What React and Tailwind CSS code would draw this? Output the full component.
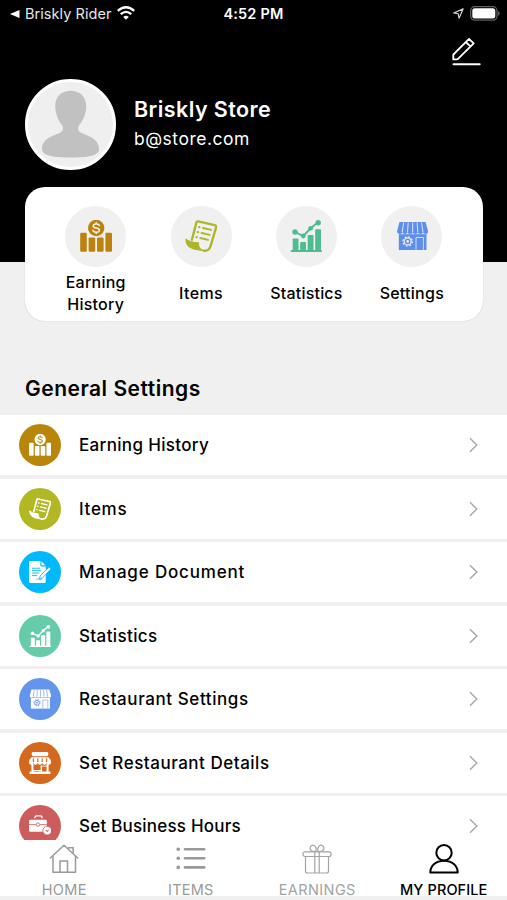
import React from 'react';

const EarningIcon = ({ className, cut }) => (
    <svg viewBox="0 0 32 32" className={className} fill="currentColor">
        <rect x="0.2" y="12.8" width="6.6" height="19" rx="1.2" />
        <rect x="8.6" y="17.4" width="6.6" height="14.4" rx="1.2" />
        <rect x="17" y="17.4" width="6.6" height="14.4" rx="1.2" />
        <rect x="25.4" y="12.8" width="6.6" height="19" rx="1.2" />
        <circle cx="16.2" cy="8" r="8.2" />
        <path d="M19.3 5.6C19 4.4 17.9 3.9 16.2 3.9c-1.8 0-3 .7-3 2 0 3 6.2 1.3 6.2 4.3 0 1.3-1.3 2-3.2 2-1.9 0-3.1-.7-3.3-2M16.2 2.6v1.3M16.2 12.2v1.3" fill="none" stroke={cut} strokeWidth="1.5" strokeLinecap="round" />
    </svg>
);

const ItemsIcon = ({ className }) => (
    <svg viewBox="0 0 32 32" className={className} fill="none" stroke="currentColor" strokeWidth="2.4" strokeLinejoin="round" strokeLinecap="round">
        <path d="M7 19.5 11.4 2.500q.4-1.400 1.800-1.100l16.500 3.700q1.900.5 1.400 2.300L25.600 26q-1.600 5.200-6.600 4.700" />
        <path d="M1 19.300q4 3.300 12.400 3.700c-.3 4.500 1.800 7 5.600 7.700L9.500 29C4.500 28 1 24.500 1 19.300z" fill="currentColor" strokeWidth="1.3" />
        <path d="M18 8l8.200 1.900M16.600 13l8.200 1.900M15.300 18l7.800 1.900" strokeWidth="1.9" />
        <path d="M14.200 7.100h.1M12.900 12.100h.1M11.600 17.100h.1" strokeWidth="2.4" />
    </svg>
);

const DocumentIcon = ({ className, cut }) => (
    <svg viewBox="0 0 32 32" className={className} fill="currentColor">
        <path d="M2 0h14.500v6.500q0 1.500 1.500 1.500h6.300v22q0 2-2 2H2q-2 0-2-2V2q0-2 2-2z" />
        <path d="M18 .5 23.800 6.300H18z" />
        <path d="M4.300 10.500h12M4.300 14h13M4.300 17.500h10.500M4.300 21h7.500" stroke={cut} strokeWidth="1.3" />
        <path d="M29.300 8.800l3 2.700-12.700 12.700-4.600 1.600 1.500-4.400z" stroke={cut} strokeWidth="1.2" />
        <path d="M10.500 27.500q2.500-3 4-1.200t5-.6" fill="none" stroke={cut} strokeWidth="1.2" />
    </svg>
);

const StatisticsIcon = ({ className }) => (
    <svg viewBox="0 0 32 32" className={className} fill="currentColor">
        <rect x="2.7" y="18.6" width="5.8" height="12" rx=".8" />
        <rect x="10.2" y="22" width="5.8" height="9" rx=".8" />
        <rect x="17.7" y="15" width="5.8" height="16" rx=".8" />
        <rect x="25.2" y="9.3" width="5.8" height="22" rx=".8" />
        <rect x=".6" y="30" width="31.4" height="1.9" rx=".9" />
        <path d="M5 12l8.300 4 7.400-7.700L28 2.300" fill="none" stroke="currentColor" strokeWidth="1.9" />
        <circle cx="5" cy="12" r="2.7" />
        <circle cx="13.3" cy="16" r="2.4" />
        <circle cx="20.7" cy="8.3" r="2.4" />
        <circle cx="28.2" cy="2.7" r="2.7" />
    </svg>
);

const StoreIcon = ({ className, cut }) => (
    <svg viewBox="0 0 32 32" className={className} fill="currentColor">
        <path d="M3.500 2h26l2.800 9.500q0 2.400-2.600 2.400t-2.600-2q0 2-2.600 2t-2.600-2q0 2-2.600 2t-2.600-2q0 2-2.600 2t-2.600-2q0 2-2.600 2t-2.600-2q0 2-2.600 2T1 11.500z" />
        <path d="M7.700 2.500 6.200 12M12.200 2.500l-.7 9.500M16.700 2.500V12M21.100 2.500l.7 9.500M25.500 2.500 27 12" fill="none" stroke={cut} strokeWidth=".9" />
        <path d="M2.800 14.200h27.700V30H2.800z" />
        <circle cx="11.7" cy="21.4" r="3.500" fill="none" stroke={cut} strokeWidth="1.3" />
        <circle cx="11.7" cy="21.4" r="4.7" fill="none" stroke={cut} strokeWidth="1.2" strokeDasharray="1.85 1.84" />
        <circle cx="11.7" cy="21.4" r="1.3" fill={cut} />
        <path d="M20 29.800V17.500h7.400v12.300" fill="none" stroke={cut} strokeWidth=".8" />
    </svg>
);

const RestaurantIcon = ({ className, cut }) => (
    <svg viewBox="0 0 32 32" className={className} fill="currentColor">
        <rect x="4" y="0" width="24" height="6" rx="1.5" />
        <path d="M3.500 7.500h25l3.500 5v2.300H0v-2.300z" />
        <path d="M0 13h32v2.200a3.200 3.200 0 0 1-6.400 0 3.200 3.200 0 0 1-6.400 0 3.200 3.200 0 0 1-6.400 0 3.200 3.200 0 0 1-6.400 0 3.200 3.200 0 0 1-6.400 0z" />
        <path d="M6.400 9.500v5M12.800 9.500v5M19.200 9.500v5M25.600 9.500v5" stroke={cut} strokeWidth="1.7" />
        <path d="M3.500 17h3v12h-3zM25.500 17h3v12h-3zM.8 28.500h30.400V32H.8zM17 20h2v9h-2zM6 26h12v1.800H6z" />
        <path d="M17 20.500h9" stroke="currentColor" strokeWidth="1.2" />
    </svg>
);

const BriefcaseIcon = ({ className, cut }) => (
    <svg viewBox="0 0 32 32" className={className} fill="currentColor">
        <path d="M8.500 4.700V3.800q0-2.500 2.500-2.500h5.500Q19 1.300 19 3.800v.9" fill="none" stroke="currentColor" strokeWidth="1.8" />
        <rect x="0" y="7" width="26" height="17.5" rx="2" />
        <path d="M0 14h10M16 14h10" stroke={cut} strokeWidth="1.2" />
        <circle cx="13" cy="14" r="2.5" fill="currentColor" stroke={cut} strokeWidth="1.2" />
        <circle cx="26.5" cy="22.7" r="6.4" stroke={cut} strokeWidth="1.2" />
        <path d="M23.500 22l3 2.800 3-2.800z" fill={cut} />
    </svg>
);

const HomeIcon = () => (
    <svg viewBox="0 0 30 30" className="size-[30px]" fill="none" stroke="currentColor" strokeWidth="1.5" strokeLinejoin="round" strokeLinecap="round">
        <path d="M4 12.500V28.300h22.500V12.500" />
        <path d="M1.300 14 15 1.300 28.700 14M19.500 3.800h4.700v5" />
        <path d="M11 28V17h7.500v11" />
    </svg>
);

const ListIcon = () => (
    <svg viewBox="0 0 30 30" className="size-[30px]" fill="none" stroke="currentColor" strokeLinecap="round">
        <path d="M9 5.200h19.200M9 14.300h19.200M9 23.400h19.200" strokeWidth="2.6" />
        <path d="M2.200 5.200h.1M2.200 14.300h.1M2.200 23.400h.1" strokeWidth="3.6" />
    </svg>
);

const GiftIcon = () => (
    <svg viewBox="0 0 30 30" className="size-[30px]" fill="none" stroke="currentColor" strokeWidth="1.2" strokeLinejoin="round">
        <rect x="1" y="7.8" width="28" height="4.7" rx="2" />
        <path d="M3.500 12.500V27q0 2 2 2h19q2 0 2-2V12.500M12.800 7.800V29M17.200 7.800V29" />
        <path d="M13.500 7.500C10.500 7.800 7.800 6.500 8 4c.2-2.800 3.500-3.800 5.300-1.500 1 1.300 1.200 3.500.2 5zM16.500 7.500c3 .3 5.700-1 5.500-3.500-.2-2.800-3.500-3.800-5.300-1.500-1 1.300-1.200 3.500-.2 5z" />
    </svg>
);

const ProfileIcon = () => (
    <svg viewBox="0 0 30 30" className="size-[30px]" fill="none" stroke="currentColor" strokeWidth="2" strokeLinejoin="round">
        <circle cx="15" cy="8.7" r="7.7" />
        <path d="M1.300 28.500C1.300 21.500 7 16.700 15 16.700s13.700 4.800 13.700 11.800z" />
    </svg>
);

const shortcuts = [
    { label: 'Earning History', Icon: EarningIcon, color: 'text-[#bd820b]', text: 'tracking-[0.25px]' },
    { label: 'Items', Icon: ItemsIcon, color: 'text-[#aeb52b]', text: 'tracking-[0.4px]' },
    { label: 'Statistics', Icon: StatisticsIcon, color: 'text-[#4dbc90]', text: 'tracking-[0.2px]' },
    { label: 'Settings', Icon: StoreIcon, color: 'text-[#5d8eea]', text: 'tracking-[0.25px]' }
];

const settings = [
    { label: 'Earning History', Icon: EarningIcon, bg: 'bg-[#b8860b]', cut: '#b8860b', text: 'tracking-[0.33px]' },
    { label: 'Items', Icon: ItemsIcon, bg: 'bg-[#b2b724]', cut: '#b2b724', text: 'tracking-[0.7px]' },
    { label: 'Manage Document', Icon: DocumentIcon, bg: 'bg-[#00b9fb]', cut: '#00b9fb', text: 'tracking-[0.83px]' },
    { label: 'Statistics', Icon: StatisticsIcon, bg: 'bg-[#66cba8]', cut: '#66cba8', text: 'tracking-[0.38px]' },
    { label: 'Restaurant Settings', Icon: StoreIcon, bg: 'bg-[#6495ed]', cut: '#6495ed', text: 'tracking-[0.58px]' },
    { label: 'Set Restaurant Details', Icon: RestaurantIcon, bg: 'bg-[#d2691e]', cut: '#d2691e', text: 'tracking-[0.52px]' },
    { label: 'Set Business Hours', Icon: BriefcaseIcon, bg: 'bg-[#cd5c5c]', cut: '#cd5c5c', text: 'tracking-[0.21px]' }
];

const tabs = [
    { label: 'HOME', Icon: HomeIcon, style: 'text-[#999]', text: 'tracking-[0.3px]' },
    { label: 'ITEMS', Icon: ListIcon, style: 'text-[#999]', text: 'tracking-[0.2px]' },
    { label: 'EARNINGS', Icon: GiftIcon, style: 'text-[#a3a3a3]', text: 'tracking-[0.4px]' },
    { label: 'MY PROFILE', Icon: ProfileIcon, style: 'text-black font-medium', text: 'tracking-[0.1px]' }
];

const StatusBar = () => (
    <div className="grid grid-cols-3 items-center h-7 px-[10px] text-white text-[14.5px] leading-none">
        <div className="flex items-center">
            <svg viewBox="0 0 10 8" className="w-[10px] h-2 mr-[5px]" fill="currentColor"><path d="M0 4 9.500 0v8z" /></svg>
            <span className="tracking-[0.05px] whitespace-nowrap text-gray-200">Briskly Rider</span>
            <svg viewBox="0 0 18 14" className="w-[18px] h-[14px] ml-[5.5px] -mt-[2px] shrink-0" fill="none" stroke="currentColor" strokeWidth="2.3">
                <path d="M.8 4.900q8.200-7.400 16.400 0M3.700 8.100q5.300-4.500 10.600 0" />
                <path d="M9 13.700 6.200 10.900q2.800-2.300 5.600 0z" fill="currentColor" stroke="none" />
            </svg>
        </div>
        <span className="text-center font-semibold tracking-[0.2px]">4:52 PM</span>
        <div className="flex items-center justify-end">
            <svg viewBox="0 0 12 12" className="size-[11px] mr-[6px] -mt-[2px]" fill="none" stroke="#d4d4d4" strokeWidth="1.3" strokeLinejoin="round">
                <path d="M11 1 .8 5.400l4.900.9.900 4.900z" />
            </svg>
            <svg viewBox="0 0 30 15" className="w-[30px] h-[15px] -mr-[3px] -mt-[1px]">
                <rect x=".7" y=".7" width="26.3" height="13.4" rx="4" fill="none" stroke="#606060" strokeWidth="1.3" />
                <rect x="2.3" y="2.3" width="23" height="10.2" rx="2.5" fill="#fff" />
                <path d="M28 5q1.600.8 1.600 2.400T28 9.800z" fill="#606060" />
            </svg>
        </div>
    </div>
);

const App = () => {
    return (
        <div className="w-[507px] h-[900px] overflow-hidden flex flex-col bg-[#f0f0f0] text-black font-['Inter',sans-serif]">
            <header className="bg-black h-[262px] shrink-0">
                <StatusBar />
                <div className="flex justify-end h-[51px] pt-[9px] pr-[26px]">
                    <svg viewBox="0 0 30 30" className="size-[30px]" fill="none" stroke="#fff" strokeWidth="1.8" strokeLinejoin="round" strokeLinecap="round">
                        <path d="M2.400 17.500 18 1.900l4.700 4.400L7 21.900q-.5.5-1.200.5H2.300v-3.700q0-.7.1-1.200zM14.800 5l4.500 4.300" />
                        <path d="M2.500 27.300h26.200" strokeWidth="2" />
                    </svg>
                </div>
                <div className="flex items-center pl-[25px] gap-[18px]">
                    <div className="size-[91px] rounded-full border-[3px] border-white bg-[#efefef] overflow-hidden">
                        <svg viewBox="0 0 85 85" fill="#c1c1c1">
                            <path d="M42.700 8.800C33 8.800 26.700 15.500 27.300 25c.4 8 3.200 13.500 7 18.500 1.500 3 .8 5.500-2.300 7.300-5.500 2.700-18 5.500-18 16.200 0 7 12 8.500 28.700 8.500S71 74 71 67c0-10.700-12.500-13.500-18-16.200-3.100-1.800-3.500-4.300-2-7.300 3.800-5 6.900-10.500 7.200-18.500.4-9.500-5.800-16.200-15.500-16.200z" />
                        </svg>
                    </div>
                    <div className="text-white -mt-[4px]">
                        <h1 className="text-[21.5px] leading-[32px] tracking-[0.42px] font-semibold">Briskly Store</h1>
                        <p className="text-[17.5px] leading-[26px] tracking-[0.5px] pt-px">b@store.com</p>
                    </div>
                </div>
            </header>

            <section className="-mt-[75px] ml-[25px] mr-[24.5px] h-[134px] shrink-0 bg-white rounded-[20px] px-[18px] pt-[18.5px] grid grid-cols-4 shadow-[0_0_1px_rgba(0,0,0,0.3)]">
                {shortcuts.map(({ label, Icon, color, text }) => (
                    <div key={label} className="flex flex-col items-center">
                        <div className="size-[61px] rounded-full bg-[#f0f0f0] flex items-center justify-center">
                            <Icon className={`size-8 ${color}`} cut="#f0f0f0" />
                        </div>
                        <div className="h-[44px] mt-[4px] w-20 flex items-center justify-center">
                            <span className={`text-center text-[16px] leading-[22px] font-medium ${text}`}>{label}</span>
                        </div>
                    </div>
                ))}
            </section>

            <main className="flex-1 overflow-hidden">
                <h2 className="pt-[51px] h-[94px] pl-[25px] text-[21px] leading-[33px] tracking-[0.5px] font-semibold">General Settings</h2>
                <ul className="flex flex-col gap-[3.5px]">
                    {settings.map(({ label, Icon, bg, cut, text }) => (
                        <li key={label} className="h-[60px] shrink-0 bg-white flex items-center pl-[19px] pr-[28px]">
                            <div className={`size-[42px] rounded-full flex items-center justify-center text-white ${bg}`}>
                                <Icon className="size-[22px]" cut={cut} />
                            </div>
                            <span className={`ml-[18px] pt-[1.5px] flex-1 text-[17px] font-medium ${text}`}>{label}</span>
                            <svg viewBox="0 0 10 16" className="w-[10px] h-4" fill="none" stroke="#aaa" strokeWidth="1.5">
                                <path d="M1 1.200 7.800 8 1 14.800" />
                            </svg>
                        </li>
                    ))}
                </ul>
            </main>

            <nav className="h-[55.5px] shrink-0 bg-white grid grid-cols-4 pl-px">
                {tabs.map(({ label, Icon, style, text }) => (
                    <div key={label} className={`flex flex-col items-center pt-[4px] ${style}`}>
                        <Icon />
                        <span className={`mt-[6.5px] text-[14.5px] leading-[17px] ${text}`}>{label}</span>
                    </div>
                ))}
            </nav>
            <div className="h-[4.5px] shrink-0" />
        </div>
    );
};

export default App;
